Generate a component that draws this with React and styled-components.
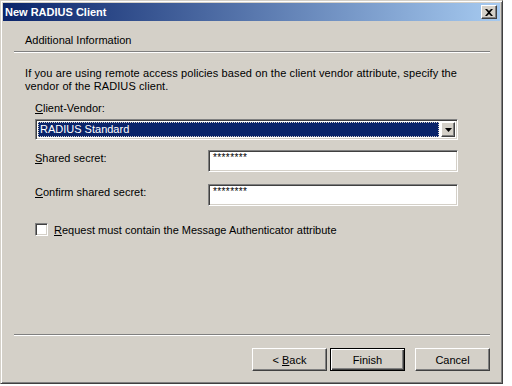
import styled, { createGlobalStyle, css } from "styled-components";

const GlobalStyle = createGlobalStyle`
  html, body {
    margin: 0;
    padding: 0;
    background: #ffffff;
  }
  body {
    font-family: "Liberation Sans", Arial, sans-serif;
    font-size: 11px;
    color: #000;
  }
`;

const raised = css`
  border: 1px solid;
  border-color: #ffffff #404040 #404040 #ffffff;
  box-shadow: inset -1px -1px #808080;
`;

const sunken = css`
  border: 1px solid;
  border-color: #808080 #ffffff #ffffff #808080;
  box-shadow: inset 1px 1px #404040, inset -1px -1px #d4d0c8;
`;

const Window = styled.div`
  width: 503px;
  height: 384px;
  box-sizing: border-box;
  display: flex;
  flex-direction: column;
  background: #d4d0c8;
  border: 1px solid;
  border-color: #d4d0c8 #404040 #404040 #d4d0c8;
  box-shadow: inset 1px 1px #ffffff, inset -1px -1px #808080;
  padding: 2px;
`;

const TitleBar = styled.div`
  height: 18px;
  display: flex;
  align-items: center;
  justify-content: space-between;
  padding: 0 3px 0 2px;
  background: linear-gradient(to right, #0a246a, #a6caf0);
  color: #ffffff;
  font-weight: bold;
  font-size: 11px;
`;

const CloseButton = styled.div`
  width: 14px;
  height: 12px;
  background: #d4d0c8;
  ${raised};
  display: flex;
  align-items: center;
  justify-content: center;

  svg {
    display: block;
  }
`;

const Header = styled.div`
  height: 30px;
  box-sizing: border-box;
  display: flex;
  align-items: center;
  padding: 8px 0 0 22px;
`;

const Separator = styled.div`
  margin: 0 10px 0 11px;
  border-top: 1px solid #808080;
  border-bottom: 1px solid #ffffff;
`;

const Body = styled.div`
  flex: 1;
  padding: 14px 0 0 22px;
`;

const Description = styled.p`
  margin: 0;
  line-height: 13px;
  width: 450px;
  letter-spacing: 0.1px;
`;

const Form = styled.div`
  margin: 9px 0 0 10px;
  width: 423px;
`;

const Label = styled.div`
  line-height: 13px;
  padding-top: ${(p) => p.$top || 0}px;
`;

const Key = styled.span`
  text-decoration: underline;
`;

const Combo = styled.div`
  margin-top: 4px;
  height: 21px;
  box-sizing: border-box;
  background: #ffffff;
  ${sunken};
  display: flex;
  align-items: stretch;
  padding: 2px;
`;

const Selected = styled.div`
  flex: 1;
  background: #0a246a;
  color: #ffffff;
  outline: 1px dotted #d4d0c8;
  outline-offset: -1px;
  padding-left: 2px;
  line-height: 15px;
`;

const DropButton = styled.div`
  width: 14px;
  box-sizing: border-box;
  background: #d4d0c8;
  ${raised};
  display: flex;
  align-items: center;
  justify-content: center;
  margin-left: 2px;
`;

const FieldRow = styled.div`
  display: grid;
  grid-template-columns: 173px 1fr;
  margin-top: ${(p) => p.$gap}px;
  align-items: start;
`;

const Input = styled.div`
  height: 22px;
  box-sizing: border-box;
  background: #ffffff;
  ${sunken};
  padding: 2px 0 0 4px;
  font-size: 10px;
  line-height: 10px;
  letter-spacing: 0.4px;
`;

const CheckRow = styled.label`
  display: flex;
  align-items: center;
  gap: 6px;
  margin-top: 17px;
`;

const CheckBox = styled.span`
  width: 13px;
  height: 13px;
  box-sizing: border-box;
  background: #ffffff;
  ${sunken};
`;

const Footer = styled.div`
  display: flex;
  justify-content: flex-end;
  padding: 12px 10px 10px 0;
`;

const Button = styled.div`
  width: 75px;
  height: 23px;
  box-sizing: border-box;
  display: flex;
  align-items: center;
  justify-content: center;
  margin-left: ${(p) => p.$gap || 0}px;
  ${(p) =>
    p.$default
      ? css`
          border: 1px solid #000000;
          box-shadow: inset 1px 1px #ffffff, inset -1px -1px #404040,
            inset -2px -2px #808080;
        `
      : raised};
`;

function App() {
  return (
    <>
      <GlobalStyle />
      <Window>
        <TitleBar>
          <span>New RADIUS Client</span>
          <CloseButton>
            <svg width="8" height="7" viewBox="0 0 8 7">
              <path
                d="M0 0h2l2 2 2-2h2L5 3.5 8 7H6L4 5 2 7H0l3-3.5z"
                fill="#000"
              />
            </svg>
          </CloseButton>
        </TitleBar>

        <Header>Additional Information</Header>
        <Separator />

        <Body>
          <Description>
            If you are using remote access policies based on the client vendor
            attribute, specify the vendor of the RADIUS client.
          </Description>

          <Form>
            <Label>
              <Key>C</Key>lient-Vendor:
            </Label>
            <Combo>
              <Selected>RADIUS Standard</Selected>
              <DropButton>
                <svg width="7" height="4" viewBox="0 0 7 4">
                  <path d="M0 0h7L3.5 4z" fill="#000" />
                </svg>
              </DropButton>
            </Combo>

            <FieldRow $gap={10}>
              <Label $top={2}>
                <Key>S</Key>hared secret:
              </Label>
              <Input>********</Input>
            </FieldRow>

            <FieldRow $gap={12}>
              <Label $top={2}>
                <Key>C</Key>onfirm shared secret:
              </Label>
              <Input>********</Input>
            </FieldRow>

            <CheckRow>
              <CheckBox />
              <span>
                <Key>R</Key>equest must contain the Message Authenticator
                attribute
              </span>
            </CheckRow>
          </Form>
        </Body>

        <Separator />
        <Footer>
          <Button>
            &lt;&nbsp;<Key>B</Key>ack
          </Button>
          <Button $default $gap={3}>
            Finish
          </Button>
          <Button $gap={10}>Cancel</Button>
        </Footer>
      </Window>
    </>
  );
}

export default App;
